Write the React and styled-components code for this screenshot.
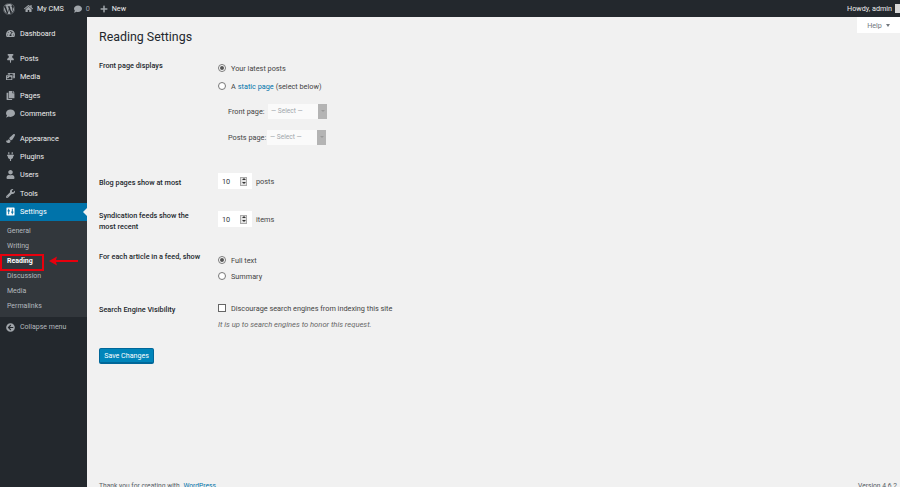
import React from "react";
import styled, { createGlobalStyle } from "styled-components";
import {
  FaWordpress, FaHome, FaComment, FaPlus, FaTachometerAlt, FaThumbtack, FaPhotoVideo,
  FaCopy, FaPaintBrush, FaPlug, FaUser, FaWrench, FaArrowCircleLeft,
} from "react-icons/fa";

const Global = createGlobalStyle`
  html, body { margin: 0; padding: 0; height: 100%; overflow: hidden; background: #f1f1f1; }
  #root { height: 100%; }
  * { box-sizing: border-box; }
`;

const Page = styled.div`
  position: relative;
  width: 900px;
  height: 487px;
  overflow: hidden;
  display: flex;
  flex-direction: column;
  font-family: Roboto, "Liberation Sans", sans-serif;
  font-size: 7.3px;
  color: #23282d;
  background: #f1f1f1;
`;

const TopBar = styled.header`
  flex: 0 0 17px;
  height: 17px;
  background: #23282d;
  color: #eee;
  font-size: 7.2px;
  display: flex;
  align-items: center;
`;

const BarItem = styled.div`
  display: flex;
  align-items: center;
  gap: ${(p) => p.$gap ?? 4}px;
  margin-left: ${(p) => p.$left ?? 0}px;
  color: ${(p) => p.$muted ? "#a0a5aa" : "#eee"};
  svg { color: #a0a5aa; flex: none; }
`;

const Avatar = styled.span`
  width: 5px;
  height: 9px;
  background: #d8d8d8;
  margin-left: 3px;
`;

const Howdy = styled.div`
  margin-left: auto;
  display: flex;
  align-items: center;
`;

const Body = styled.div`
  flex: 1;
  display: flex;
  min-height: 0;
`;

const Sidebar = styled.nav`
  flex: 0 0 87px;
  background: #23282d;
  color: #eee;
  padding-top: 7px;
`;

const MenuItem = styled.div`
  position: relative;
  height: 18.4px;
  display: flex;
  align-items: center;
  padding-left: 6px;
  gap: 5px;
  margin-top: ${(p) => p.$top ?? 0}px;
  background: ${(p) => (p.$active ? "#0073aa" : "transparent")};
  color: ${(p) => (p.$active ? "#fff" : "#eee")};
  svg { flex: none; width: 9px; height: 9px; color: ${(p) => (p.$active ? "#fff" : "#a0a5aa")}; }
`;

const MenuLabel = styled.span`
  color: ${(p) => p.$dim ? "#b4b9be" : "inherit"};
  font-size: ${(p) => p.$dim ? "7px" : "inherit"};
`;

const ActiveNotch = styled.span`
  position: absolute;
  right: 0;
  top: 5px;
  width: 0;
  height: 0;
  border-style: solid;
  border-width: 4px 4px 4px 0;
  border-color: transparent #f1f1f1 transparent transparent;
`;

const SubMenu = styled.div`
  background: #32373c;
  padding: 3px 0 3px;
`;

const SubItem = styled.div`
  height: 15px;
  display: flex;
  align-items: center;
  padding-left: 7px;
  font-size: 7px;
  font-weight: ${(p) => (p.$current ? 700 : 400)};
  color: ${(p) => (p.$current ? "#fff" : "#b4b9be")};
`;

const Main = styled.main`
  flex: 1;
  min-width: 0;
  padding-left: 12px;
  display: flex;
  flex-direction: column;
`;

const Title = styled.h1`
  margin: 12px 0 14px;
  font-size: 12.4px;
  line-height: 16px;
  font-weight: 400;
  color: #23282d;
`;

const Row = styled.section`
  display: grid;
  grid-template-columns: 119px 1fr;
  margin-top: ${(p) => p.$top ?? 0}px;
`;

const Label = styled.div`
  line-height: 11px;
  font-weight: 500;
  color: #23282d;
  width: 108px;
  padding-top: ${(p) => p.$pad ?? 0}px;
`;

const Field = styled.div`
  display: flex;
  flex-direction: column;
  padding-top: ${(p) => p.$pad ?? 0}px;
`;

const Line = styled.div`
  display: flex;
  align-items: center;
  height: ${(p) => p.$h ?? 16}px;
  color: #444;
  margin-bottom: ${(p) => p.$after ?? 0}px;
  padding-left: ${(p) => p.$indent ?? 0}px;
  white-space: nowrap;
`;

const Radio = styled.span`
  width: 8px;
  height: 8px;
  border-radius: 50%;
  border: 1px solid #777;
  background: #fff;
  display: flex;
  align-items: center;
  justify-content: center;
  margin-right: 5px;
  &::after {
    content: "";
    width: 4px;
    height: 4px;
    border-radius: 50%;
    background: ${(p) => (p.$on ? "#555" : "transparent")};
  }
`;

const Check = styled.span`
  width: 8px;
  height: 8px;
  border: 1px solid #666;
  background: #fff;
  margin-right: 5px;
`;

const Link = styled.span`
  color: #0073aa;
  margin: 0 2px;
`;

const SelectLabel = styled.span`
  width: ${(p) => p.$w}px;
  color: #444;
`;

const Select = styled.div`
  width: 59px;
  height: 15px;
  background: #fafafa;
  display: flex;
  align-items: center;
  justify-content: space-between;
  padding-left: 3px;
  color: #a0a5aa;
  font-size: 6.6px;
`;

const SelectButton = styled.span`
  width: 9px;
  height: 100%;
  background: #b4b4b4;
  display: flex;
  align-items: center;
  justify-content: center;
  &::after {
    content: "";
    border-style: solid;
    border-width: 2px 2px 0 2px;
    border-color: #999 transparent transparent transparent;
  }
`;

const NumberBox = styled.div`
  width: 34px;
  height: 16px;
  background: #fff;
  display: flex;
  align-items: center;
  justify-content: space-between;
  padding: 0 5px 0 4px;
  color: #32373c;
  margin-right: 4px;
`;

const Spinner = styled.span`
  width: 7px;
  height: 9px;
  background: #e4e4e4;
  border: 1px solid #aaa;
  display: flex;
  flex-direction: column;
  align-items: center;
  justify-content: space-around;
  &::before, &::after {
    content: "";
    border-style: solid;
    border-color: #333 transparent;
  }
  &::before { border-width: 0 2px 2px 2px; }
  &::after { border-width: 2px 2px 0 2px; }
`;

const Note = styled.div`
  font-style: italic;
  font-size: 7.6px;
  color: #666;
  margin-top: 5px;
  height: 11px;
  line-height: 11px;
`;

const SaveButton = styled.button`
  width: 55px;
  height: 16px;
  margin: 18px 0 0;
  padding: 0;
  background: #0085ba;
  border: 1px solid #006799;
  border-bottom-width: 2px;
  border-radius: 2px;
  color: #fff;
  font: 7.1px Roboto, "Liberation Sans", sans-serif;
`;

const Footer = styled.footer`
  margin-top: auto;
  height: 5px;
  display: flex;
  justify-content: space-between;
  padding-right: 3px;
  color: #555d66;
  font-size: 6.7px;
  line-height: 9px;
`;

const HelpTab = styled.div`
  position: absolute;
  top: 17px;
  right: 0;
  width: 43px;
  height: 16px;
  background: #fff;
  color: #72777c;
  font-size: 7.2px;
  display: flex;
  align-items: center;
  justify-content: center;
  gap: 4px;
  &::after {
    content: "";
    border-style: solid;
    border-width: 3px 2.5px 0 2.5px;
    border-color: #72777c transparent transparent transparent;
  }
`;

const RedBox = styled.div`
  position: absolute;
  left: 0;
  top: 254px;
  width: 44px;
  height: 17px;
  border: 2px solid #e8000d;
`;

const RedArrow = styled.svg`
  position: absolute;
  left: 48px;
  top: 256px;
`;

const SettingsIcon = () => (
  <svg viewBox="0 0 20 20">
    <path fill="currentColor" fillRule="evenodd" d="M2 1h16a1 1 0 0 1 1 1v16a1 1 0 0 1-1 1H2a1 1 0 0 1-1-1V2a1 1 0 0 1 1-1zM5 4v3H3.500v3H5v6h2v-6h1.500V7H7V4zm8 0v6h-1.500v3H13v3h2v-3h1.500v-3H15V4z" />
  </svg>
);

const items1 = [
  ["Posts", FaThumbtack],
  ["Media", FaPhotoVideo],
  ["Pages", FaCopy],
  ["Comments", FaComment],
];
const items2 = [
  ["Appearance", FaPaintBrush],
  ["Plugins", FaPlug],
  ["Users", FaUser],
  ["Tools", FaWrench],
];
const subs = ["General", "Writing", "Reading", "Discussion", "Media", "Permalinks"];

export default function App() {
  return (
    <Page>
      <Global />
      <TopBar>
        <BarItem $left={3}><FaWordpress size={12} /></BarItem>
        <BarItem $left={9}><FaHome size={9} />My CMS</BarItem>
        <BarItem $left={10} $muted><FaComment size={8} />0</BarItem>
        <BarItem $left={10}><FaPlus size={8} />New</BarItem>
        <Howdy>Howdy, admin<Avatar /></Howdy>
      </TopBar>
      <Body>
        <Sidebar>
          <MenuItem><FaTachometerAlt /><span>Dashboard</span></MenuItem>
          {items1.map(([t, I], i) => (
            <MenuItem key={t} $top={i === 0 ? 7 : 0}><I /><span>{t}</span></MenuItem>
          ))}
          {items2.map(([t, I], i) => (
            <MenuItem key={t} $top={i === 0 ? 6 : 0}><I /><span>{t}</span></MenuItem>
          ))}
          <MenuItem $active><SettingsIcon /><span>Settings</span><ActiveNotch /></MenuItem>
          <SubMenu>
            {subs.map((s) => (
              <SubItem key={s} $current={s === "Reading"}>{s}</SubItem>
            ))}
          </SubMenu>
          <MenuItem $top={1}><FaArrowCircleLeft /><MenuLabel $dim>Collapse menu</MenuLabel></MenuItem>
        </Sidebar>
        <Main>
          <Title>Reading Settings</Title>
          <Row>
            <Label $pad={1}>Front page displays</Label>
            <Field>
              <Line $h={18}><Radio $on />Your latest posts</Line>
              <Line $h={18} $after={3}><Radio />A<Link>static page</Link>(select below)</Line>
              <Line $h={26} $indent={10}><SelectLabel $w={40}>Front page:</SelectLabel><Select>— Select —<SelectButton /></Select></Line>
              <Line $h={26} $indent={10}><SelectLabel $w={39}>Posts page:</SelectLabel><Select>— Select —<SelectButton /></Select></Line>
            </Field>
          </Row>
          <Row $top={23}>
            <Label $pad={4}>Blog pages show at most</Label>
            <Field>
              <Line><NumberBox>10<Spinner /></NumberBox>posts</Line>
            </Field>
          </Row>
          <Row $top={21}>
            <Label>Syndication feeds show the most recent</Label>
            <Field $pad={1}>
              <Line><NumberBox>10<Spinner /></NumberBox>items</Line>
            </Field>
          </Row>
          <Row $top={19}>
            <Label>For each article in a feed, show</Label>
            <Field $pad={1}>
              <Line><Radio $on />Full text</Line>
              <Line><Radio />Summary</Line>
            </Field>
          </Row>
          <Row $top={18}>
            <Label $pad={2}>Search Engine Visibility</Label>
            <Field>
              <Line $h={12}><Check />Discourage search engines from indexing this site</Line>
              <Note>It is up to search engines to honor this request.</Note>
            </Field>
          </Row>
          <div><SaveButton>Save Changes</SaveButton></div>
          <Footer>
            <span>Thank you for creating with <Link>WordPress</Link>.</span>
            <span>Version 4.6.2</span>
          </Footer>
        </Main>
      </Body>
      <HelpTab>Help</HelpTab>
      <RedBox />
      <RedArrow width="32" height="10" viewBox="0 0 32 10">
        <path fill="#e8000d" d="M1 5 L9 0.500 L8 4 H30 V6 H8 L9 9.500 Z" />
      </RedArrow>
    </Page>
  );
}
